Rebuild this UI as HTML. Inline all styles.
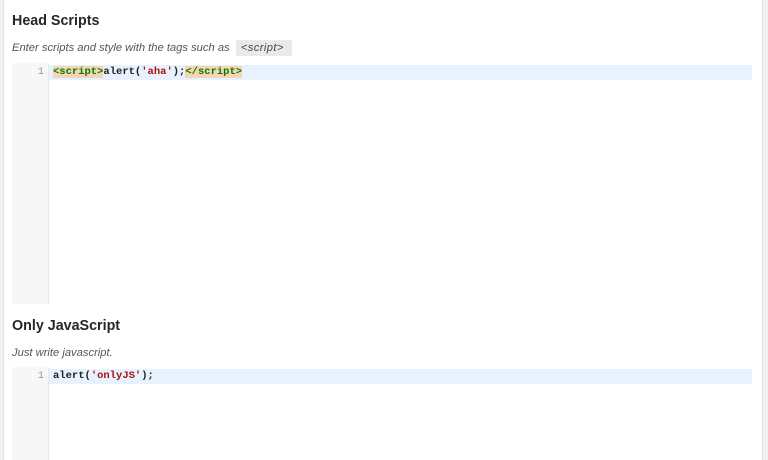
<!DOCTYPE html>
<html><head><style>
html,body{margin:0;padding:0;width:768px;height:460px;overflow:hidden;background:#f1f1f1}
.panel{position:absolute;left:3px;top:0;width:758px;height:460px;background:#fff;border-left:1px solid #e5e5e5;border-right:1px solid #e5e5e5}
h2{position:absolute;left:12px;margin:0;font:bold 14.3px "Liberation Sans",sans-serif;color:#23282d}
.desc{position:absolute;left:12px;margin:0;font:italic 11.2px "Liberation Sans",sans-serif;color:#555}
.desc code{font:italic 11.2px "Liberation Sans",sans-serif;background:#eaeaea;padding:2px 8px 2px 5px;color:#444;letter-spacing:0.4px}
.ed{position:absolute;left:12px;width:740px;background:#fff}
.gut{position:absolute;left:0;top:0;bottom:0;width:36px;background:#f7f7f7;border-right:1px solid #e8e8e8}
.ln{position:absolute;left:0;width:36px;top:2px;text-align:right;font:10.5px/15px "Liberation Mono",monospace;color:#999;box-sizing:border-box;padding-right:4px}
.line{position:absolute;left:37px;right:0;top:2px;height:15px;background:#e8f2fe;font:bold 10.5px/15px "Liberation Mono",monospace;color:#222;padding-left:4px}
.tg{color:#170;background:#f1d7b6}
.st{color:#a11}
</style></head><body>
<div class="panel"></div>
<h2 style="top:13px">Head Scripts</h2>
<p class="desc" style="top:42px">Enter scripts and style with the tags such as &nbsp;<code>&lt;script&gt;</code></p>
<div class="ed" style="top:63px;height:241px"><div class="gut"></div><div class="ln">1</div>
<div class="line"><span class="tg">&lt;script&gt;</span>alert(<span class="st">'aha'</span>);<span class="tg">&lt;/script&gt;</span></div></div>
<h2 style="top:318px">Only JavaScript</h2>
<p class="desc" style="top:347px">Just write javascript.</p>
<div class="ed" style="top:367px;height:93px"><div class="gut"></div><div class="ln">1</div>
<div class="line">alert(<span class="st">'onlyJS'</span>);</div></div>
</body></html>
